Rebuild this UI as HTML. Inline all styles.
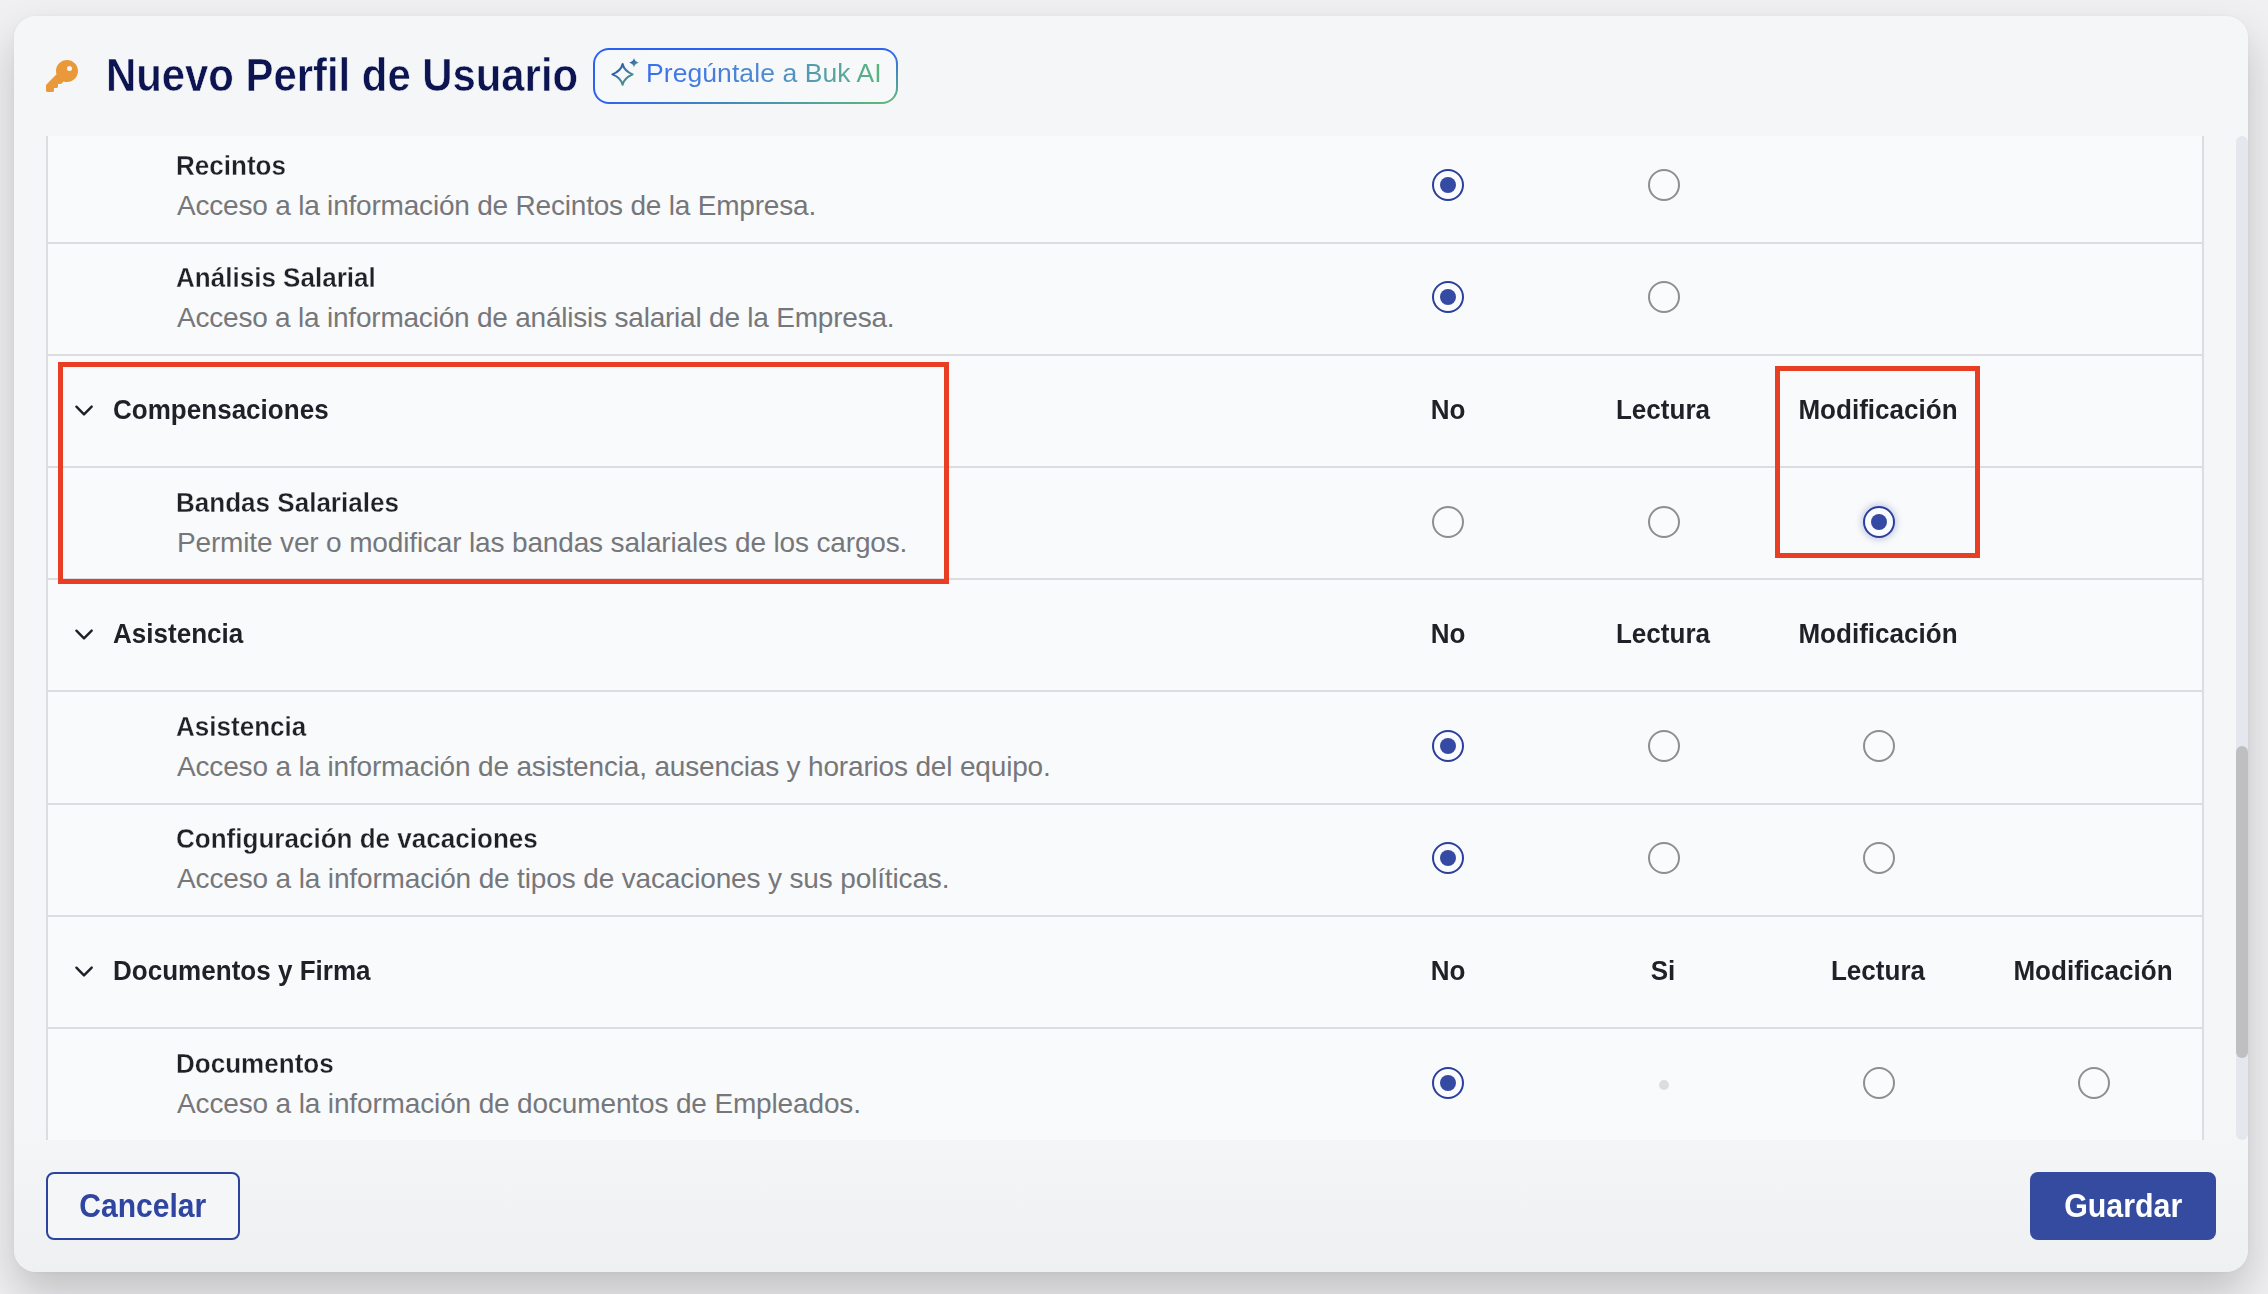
<!DOCTYPE html>
<html><head><meta charset="utf-8">
<style>
*{box-sizing:border-box;margin:0;padding:0}
html,body{width:2268px;height:1294px;overflow:hidden}
body{background:#f0f0f2;font-family:"Liberation Sans",sans-serif;position:relative}
.modal{position:absolute;left:14px;top:16px;width:2234px;height:1256px;background:linear-gradient(#f5f6f8 0%,#f5f6f8 88%,#eff0f2 100%);border-radius:22px;box-shadow:0 22px 44px rgba(0,0,0,0.2),0 0 4px rgba(0,0,0,0.03)}
.title{position:absolute;left:106px;transform:scaleX(0.90);transform-origin:0 0;top:44.9px;font-size:46.5px;font-weight:700;color:#0c1452;white-space:nowrap;line-height:60px;-webkit-text-stroke:0.55px #f5f6f8;}
.tbl{position:absolute;left:46px;top:136px;width:2158px;height:1004px;background:#f9fafb;border-left:2px solid #dcdde0;border-right:2px solid #dcdde0}
.hline{position:absolute;left:48px;width:2154px;height:2px;background:#dcdde0}
.t{position:absolute;font-size:28px;line-height:34px;white-space:nowrap}
.lbl{font-weight:700;color:#1e2127;transform:scaleX(0.93);transform-origin:0 0}
.desc{color:#76777a;letter-spacing:-0.2px}
.ilbl{-webkit-text-stroke:0.3px #f9fafb}
.colh{width:300px;text-align:center;transform-origin:50% 0}
.chev{position:absolute}
.radio{position:absolute;width:32px;height:32px;border-radius:50%;border:2px solid #8f8f8f;background:#fafbfc}
.radio.on{border-color:#2a3f9e}
.radio.on::after{content:"";position:absolute;left:6px;top:6px;width:16px;height:16px;border-radius:50%;background:#354ba3}
.radio.focus{box-shadow:0 0 6px 2px rgba(53,75,163,0.25)}
.dot{position:absolute;width:10px;height:10px;border-radius:50%;background:#dcdde0}
.hl{position:absolute;border:5px solid #e83e24}
.scrolltrack{position:absolute;left:2236px;top:136px;width:12px;height:1004px;background:#e5e7ef;border-radius:6px}
.scrollthumb{position:absolute;left:2236px;top:746px;width:12px;height:312px;background:#bfbfc1;border-radius:6px}
.btn{position:absolute;top:1172px;height:68px;border-radius:8px;font-size:33px;font-weight:700;text-align:center;line-height:64px}
.cancel{left:46px;width:194px;border:2px solid #2d43a0;color:#2f45a0;background:#f5f6f8}
.save{left:2030px;width:186px;background:#354ba0;color:#fff;line-height:68px}
.ai{position:absolute;left:593px;top:48px;width:305px;height:56px;border-radius:16px;padding:2px;background:linear-gradient(to bottom right,#2a5ff2 0%,#2f63ee 50%,#62bd72 100%)}
.ai .in{width:100%;height:100%;border-radius:14px;background:#f7f8fa}
.aitxt{position:absolute;left:646px;top:56.2px;font-size:26.5px;line-height:34px;white-space:nowrap;background:linear-gradient(to right,#3a70ec,#4d8ad0 50%,#5bb47f);-webkit-background-clip:text;background-clip:text;color:transparent;letter-spacing:0.08px}
</style></head><body>
<div class="modal"></div>
<svg style="position:absolute;left:46px;top:60px" width="32" height="32" viewBox="0 0 512 512"><path fill="#e9993a" d="M336 352c97.2 0 176-78.8 176-176S433.2 0 336 0S160 78.8 160 176c0 18.7 2.9 36.8 8.3 53.7L7 391c-4.5 4.5-7 10.6-7 17v80c0 13.3 10.7 24 24 24h80c13.3 0 24-10.7 24-24V448h40c13.3 0 24-10.7 24-24V384h40c6.4 0 12.5-2.5 17-7l33.3-33.3c16.9 5.4 35 8.3 53.7 8.3zM376 96a40 40 0 1 1 0 80 40 40 0 1 1 0-80z"/></svg>
<div class="title">Nuevo Perfil de Usuario</div>
<div class="ai"><div class="in"></div></div>
<svg style="position:absolute;left:605px;top:52px" width="40" height="40" viewBox="0 0 40 40">
<defs><linearGradient id="sg" x1="0" y1="0" x2="1" y2="1"><stop offset="0" stop-color="#1c45b0"/><stop offset="0.5" stop-color="#3f7aa8"/><stop offset="1" stop-color="#4fa56a"/></linearGradient></defs>
<path d="M17.6 12 C18.6 16.5 21.5 19.8 27.6 22.4 C21.5 25 18.6 28.2 17.6 32.8 C16.6 28.2 13.7 25 7.4 22.4 C13.7 19.8 16.6 16.5 17.6 12 Z" fill="none" stroke="url(#sg)" stroke-width="2.1" stroke-linejoin="round"/>
<path d="M29 6 C29.5 8.4 30.6 9.6 33.8 10.7 C30.6 11.8 29.5 13 29 15.4 C28.5 13 27.4 11.8 24.2 10.7 C27.4 9.6 28.5 8.4 29 6 Z" fill="url(#sg)"/>
</svg>
<div class="aitxt">Pregúntale a Buk AI</div>
<div class="tbl"></div>
<div class="t lbl ilbl" style="left:176px;top:148.8px">Recintos</div>
<div class="t desc" style="left:177px;top:188.8px;letter-spacing:-0.2px">Acceso a la información de Recintos de la Empresa.</div>
<div class="radio on" style="left:1432px;top:169px"></div>
<div class="radio" style="left:1648px;top:169px"></div>
<div class="hline" style="top:242px"></div>
<div class="t lbl ilbl" style="left:176px;top:260.8px">Análisis Salarial</div>
<div class="t desc" style="left:177px;top:300.8px;letter-spacing:-0.212px">Acceso a la información de análisis salarial de la Empresa.</div>
<div class="radio on" style="left:1432px;top:281px"></div>
<div class="radio" style="left:1648px;top:281px"></div>
<div class="hline" style="top:354px"></div>
<svg class="chev" style="left:70px;top:402px" width="30" height="16" viewBox="0 0 30 16"><path d="M6.4 4.7 L14 12.4 L21.7 4.6" fill="none" stroke="#1d2026" stroke-width="2.4" stroke-linecap="round" stroke-linejoin="round"/></svg>
<div class="t lbl" style="left:113px;top:392.8px">Compensaciones</div>
<div class="t lbl colh" style="left:1298px;top:392.8px">No</div>
<div class="t lbl colh" style="left:1513px;top:392.8px">Lectura</div>
<div class="t lbl colh" style="left:1728px;top:392.8px">Modificación</div>
<div class="hline" style="top:466px"></div>
<div class="t lbl ilbl" style="left:176px;top:485.8px">Bandas Salariales</div>
<div class="t desc" style="left:177px;top:525.8px;letter-spacing:-0.15px">Permite ver o modificar las bandas salariales de los cargos.</div>
<div class="radio" style="left:1432px;top:506px"></div>
<div class="radio" style="left:1648px;top:506px"></div>
<div class="radio on focus" style="left:1863px;top:506px"></div>
<div class="hline" style="top:578px"></div>
<svg class="chev" style="left:70px;top:626px" width="30" height="16" viewBox="0 0 30 16"><path d="M6.4 4.7 L14 12.4 L21.7 4.6" fill="none" stroke="#1d2026" stroke-width="2.4" stroke-linecap="round" stroke-linejoin="round"/></svg>
<div class="t lbl" style="left:113px;top:616.8px">Asistencia</div>
<div class="t lbl colh" style="left:1298px;top:616.8px">No</div>
<div class="t lbl colh" style="left:1513px;top:616.8px">Lectura</div>
<div class="t lbl colh" style="left:1728px;top:616.8px">Modificación</div>
<div class="hline" style="top:690px"></div>
<div class="t lbl ilbl" style="left:176px;top:709.8px">Asistencia</div>
<div class="t desc" style="left:177px;top:749.8px;letter-spacing:-0.169px">Acceso a la información de asistencia, ausencias y horarios del equipo.</div>
<div class="radio on" style="left:1432px;top:730px"></div>
<div class="radio" style="left:1648px;top:730px"></div>
<div class="radio" style="left:1863px;top:730px"></div>
<div class="hline" style="top:803px"></div>
<div class="t lbl ilbl" style="left:176px;top:821.8px">Configuración de vacaciones</div>
<div class="t desc" style="left:177px;top:861.8px;letter-spacing:-0.142px">Acceso a la información de tipos de vacaciones y sus políticas.</div>
<div class="radio on" style="left:1432px;top:842px"></div>
<div class="radio" style="left:1648px;top:842px"></div>
<div class="radio" style="left:1863px;top:842px"></div>
<div class="hline" style="top:915px"></div>
<svg class="chev" style="left:70px;top:963px" width="30" height="16" viewBox="0 0 30 16"><path d="M6.4 4.7 L14 12.4 L21.7 4.6" fill="none" stroke="#1d2026" stroke-width="2.4" stroke-linecap="round" stroke-linejoin="round"/></svg>
<div class="t lbl" style="left:113px;top:953.8px">Documentos y Firma</div>
<div class="t lbl colh" style="left:1298px;top:953.8px">No</div>
<div class="t lbl colh" style="left:1513px;top:953.8px">Si</div>
<div class="t lbl colh" style="left:1728px;top:953.8px">Lectura</div>
<div class="t lbl colh" style="left:1943px;top:953.8px">Modificación</div>
<div class="hline" style="top:1027px"></div>
<div class="t lbl ilbl" style="left:176px;top:1046.8px">Documentos</div>
<div class="t desc" style="left:177px;top:1086.8px;letter-spacing:-0.142px">Acceso a la información de documentos de Empleados.</div>
<div class="radio on" style="left:1432px;top:1067px"></div>
<div class="dot" style="left:1659px;top:1080px"></div>
<div class="radio" style="left:1863px;top:1067px"></div>
<div class="radio" style="left:2078px;top:1067px"></div>
<div class="hl" style="left:58px;top:362px;width:891px;height:222px"></div>
<div class="hl" style="left:1775px;top:366px;width:205px;height:192px"></div>
<div class="scrolltrack"></div>
<div class="scrollthumb"></div>
<div class="btn cancel"><span style="display:inline-block;transform:scaleX(0.91)">Cancelar</span></div>
<div class="btn save"><span style="display:inline-block;transform:scaleX(0.92)">Guardar</span></div>
</body></html>
